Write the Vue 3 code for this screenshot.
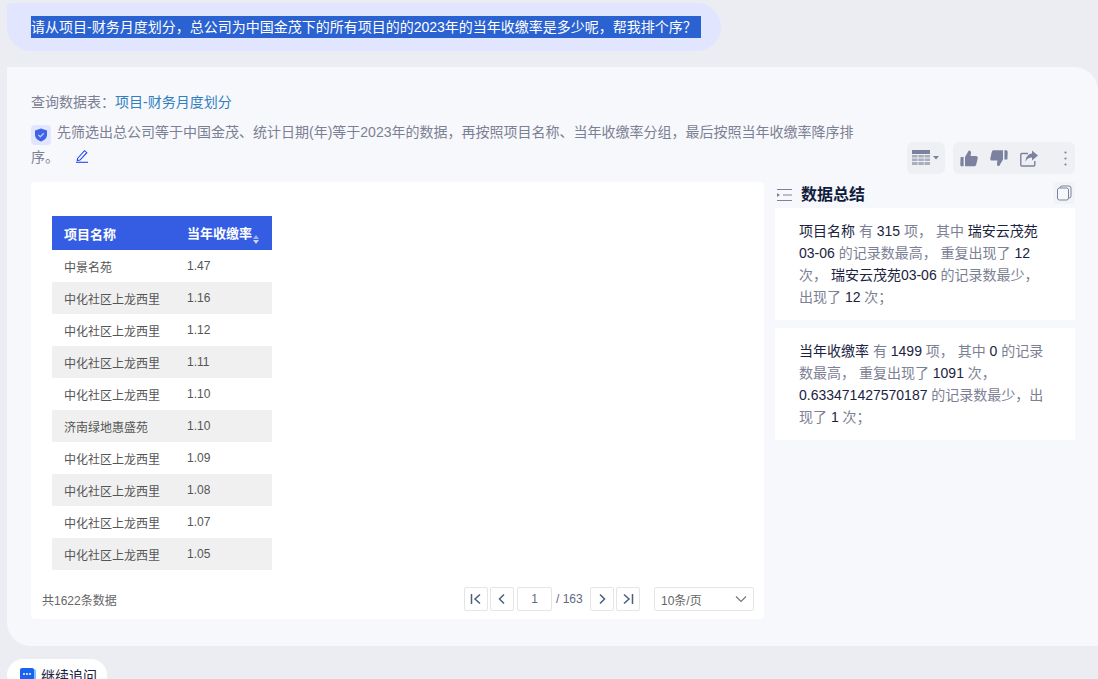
<script setup>
const rows = [
  ['中景名苑', '1.47'],
  ['中化社区上龙西里', '1.16'],
  ['中化社区上龙西里', '1.12'],
  ['中化社区上龙西里', '1.11'],
  ['中化社区上龙西里', '1.10'],
  ['济南绿地惠盛苑', '1.10'],
  ['中化社区上龙西里', '1.09'],
  ['中化社区上龙西里', '1.08'],
  ['中化社区上龙西里', '1.07'],
  ['中化社区上龙西里', '1.05']
]
</script>

<template>
  <div class="page">
    <div class="bubble"><span class="selected">请从项目-财务月度划分，总公司为中国金茂下的所有项目的的2023年的当年收缴率是多少呢，帮我排个序？</span></div>

    <section class="card">
      <div class="source">查询数据表：<span class="link">项目-财务月度划分</span></div>

      <div class="desc-row">
        <div class="desc">
          <span class="shield">
            <svg width="14" height="14" viewBox="0 0 14 14"><path d="M7 .6 13 2.5v4.6c0 3-2.6 5.2-6 6.4C3.600 12.300 1 10.100 1 7.100V2.500z" fill="#3f63e6"/><path d="M4.300 6.900 6.300 8.800 9.800 5.200" fill="none" stroke="#b9c8f7" stroke-width="1.300"/></svg>
          </span>先筛选出总公司等于中国金茂、统计日期(年)等于2023年的数据，再按照项目名称、当年收缴率分组，最后按照当年收缴率降序排序。
          <svg class="edit" width="14" height="14" viewBox="0 0 14 14"><path d="M2.500 9.500 9.500 1.700l2.300 2L5 11l-2.700.6z" fill="none" stroke="#2347e8" stroke-width="1.100"/><path d="M1 13.300h12" stroke="#2347e8" stroke-width="1.100"/></svg>
        </div>
        <div class="tools">
          <div class="tool-box table-box">
            <svg width="18" height="16" viewBox="0 0 18 16"><rect width="18" height="4" fill="#7c819f"/><path d="M0 5h5.500v2.500H0zM6.300 5h5.500v2.500H6.300zM12.500 5H18v2.500h-5.500zM0 8.500h5.500V11H0zM6.300 8.500h5.500V11H6.300zM12.500 8.500H18V11h-5.500zM0 12h5.500v3H0zM6.300 12h5.500v3H6.300zM12.500 12H18v3h-5.500z" fill="#a9adc0"/></svg>
            <svg width="6" height="4" viewBox="0 0 6 4"><path d="M0 0h6L3 3.500z" fill="#7c819f"/></svg>
          </div>
          <div class="tool-box actions">
            <svg width="18" height="17" viewBox="0 0 18 17"><path d="M5 7 8.800.6c1.600 0 2.500 1 2.200 2.600L10.500 6H16c1.300 0 2 1 1.700 2.200l-1.500 6.600c-.2.900-1 1.500-1.900 1.500H5zM.6 7H3.600V16.300H2C1 16.300.3 15.600.3 14.700z" fill="#7c819f"/></svg>
            <svg width="18" height="17" viewBox="0 0 18 17"><path d="M13 9.500 9.200 16c-1.600 0-2.500-1-2.200-2.600l.5-2.800H2c-1.300 0-2-1-1.700-2.200L1.800 1.800C2 .9 2.800.3 3.700.3H13zM17.400 9.500H14.400V.3H16c1 0 1.700.7 1.700 1.600z" fill="#7c819f"/></svg>
            <svg width="18" height="17" viewBox="0 0 18 17"><path d="M8 3.500H1.800c-.6 0-1 .4-1 1V15c0 .6.400 1 1 1h12c.6 0 1-.4 1-1v-4" fill="none" stroke="#7c819f" stroke-width="1.400"/><path d="M12 .5 18 5.500 12 10.500V7.600C9 7.600 6.800 9 5.500 11.800 5.500 7.500 8 4 12 3.600z" fill="#7c819f"/></svg>
            <svg class="more" width="3" height="15" viewBox="0 0 3 15"><circle cx="1.500" cy="1.500" r="1.100" fill="#7c819f"/><circle cx="1.500" cy="7.500" r="1.100" fill="#7c819f"/><circle cx="1.500" cy="13.500" r="1.100" fill="#7c819f"/></svg>
          </div>
        </div>
      </div>

      <div class="content">
        <div class="table-panel">
          <table class="table">
            <thead>
              <tr>
                <th class="name-col">项目名称</th>
                <th class="rate-col">当年收缴率<span class="sort"><i class="up"></i><i class="down"></i></span></th>
              </tr>
            </thead>
            <tbody>
              <tr v-for="(r, i) in rows" :key="i">
                <td class="name-col">{{ r[0] }}</td>
                <td class="rate-col">{{ r[1] }}</td>
              </tr>
            </tbody>
          </table>

          <div class="pager">
            <span class="total">共1622条数据</span>
            <div class="pager-right">
              <button class="pg">
                <svg width="12" height="12" viewBox="0 0 12 12"><path d="M1.500 1v10M10 1.500 5 6l5 4.500" fill="none" stroke="#4a5f7a" stroke-width="1.500"/></svg>
              </button>
              <button class="pg">
                <svg width="12" height="12" viewBox="0 0 12 12"><path d="M8 1.500 3.500 6 8 10.500" fill="none" stroke="#4a5f7a" stroke-width="1.500"/></svg>
              </button>
              <span class="pg-input">1</span>
              <span class="pg-count">/ 163</span>
              <button class="pg">
                <svg width="12" height="12" viewBox="0 0 12 12"><path d="M4 1.500 8.500 6 4 10.500" fill="none" stroke="#4a5f7a" stroke-width="1.500"/></svg>
              </button>
              <button class="pg">
                <svg width="12" height="12" viewBox="0 0 12 12"><path d="M2 1.500 7 6 2 10.500M10.500 1v10" fill="none" stroke="#4a5f7a" stroke-width="1.500"/></svg>
              </button>
              <div class="pg-size">
                <span>10条/页</span>
                <svg width="12" height="8" viewBox="0 0 12 8"><path d="M1 1.500 6 6.500 11 1.500" fill="none" stroke="#777" stroke-width="1.200"/></svg>
              </div>
            </div>
          </div>
        </div>

        <aside class="summary">
          <div class="summary-head">
            <svg class="fold" width="15" height="12" viewBox="0 0 15 12"><path d="M0 .5h15M6 6h9M0 11.500h15" stroke="#7c819f" stroke-width="1"/><path d="M0 4 3 6 0 8z" fill="#7c819f"/></svg>
            <span class="summary-title">数据总结</span>
            <span class="copy">
              <svg width="16" height="16" viewBox="0 0 16 16"><rect x="4" y="1" width="11" height="12" rx="2" fill="none" stroke="#7c819f"/><rect x="1.500" y="3" width="11" height="12" rx="2" fill="#f7f8fb" stroke="#7c819f"/></svg>
            </span>
          </div>
          <div class="note">
            <b>项目名称</b> 有 <b>315</b> 项， 其中 <b>瑞安云茂苑03-06</b> 的记录数最高， 重复出现了 <b>12</b> 次， <b>瑞安云茂苑03-06</b> 的记录数最少，出现了 <b>12</b> 次；
          </div>
          <div class="note">
            <b>当年收缴率</b> 有 <b>1499</b> 项， 其中 <b>0</b> 的记录数最高， 重复出现了 <b>1091</b> 次， <b>0.633471427570187</b> 的记录数最少，出现了 <b>1</b> 次；
          </div>
        </aside>
      </div>
    </section>

    <div class="followup">
      <svg width="16" height="15" viewBox="0 0 16 15"><rect x="3" y="1" width="13" height="12" rx="2" fill="#7fc4ff"/><path d="M2 0h10a2 2 0 0 1 2 2v8a2 2 0 0 1-2 2H5l-3 3v-3a2 2 0 0 1-2-2V2a2 2 0 0 1 2-2z" fill="#1a63f0"/><circle cx="4" cy="6" r="1" fill="#fff"/><circle cx="7" cy="6" r="1" fill="#fff"/><circle cx="10" cy="6" r="1" fill="#fff"/></svg>
      <span>继续追问</span>
    </div>
  </div>
</template>

<style>
html, body { margin: 0; overflow: hidden; background: #ecedf3; }
</style>

<style scoped>
.page {
  height: 679px;
  overflow: hidden;
  box-sizing: border-box;
  padding: 3px 0 0 7px;
  background: #ecedf3;
  font-family: "Liberation Sans", "Noto Sans CJK SC", sans-serif;
  font-size: 14px;
  color: #7c8094;
}
.bubble {
  width: 714px;
  height: 48px;
  box-sizing: border-box;
  padding: 13px 24px;
  background: #e1e6fe;
  border-radius: 4px 24px 24px 24px;
  line-height: 22px;
}
.selected {
  display: block;
  width: 670px;
  height: 22px;
  background: #2b62d1;
  color: #fff;
  white-space: nowrap;
}
.card {
  margin-top: 16px;
  height: 579px;
  box-sizing: border-box;
  padding: 24px 23px 0 24px;
  background: #f7f8fb;
  border-radius: 0 24px 0 24px;
}
.source { line-height: 22px; }
.link { color: #2f7fc0; }
.desc-row {
  display: flex;
  justify-content: space-between;
  align-items: flex-end;
  margin-top: 7px;
}
.desc {
  width: 826px;
  line-height: 25px;
}
.shield {
  display: inline-flex;
  align-items: center;
  justify-content: center;
  width: 20px;
  height: 20px;
  margin-right: 6px;
  border-radius: 4px;
  background: #e1e6fe;
  vertical-align: -5px;
}
.edit { margin-left: 12px; vertical-align: -1px; }
.tools { display: flex; gap: 8px; margin-bottom: -4px; }
.tool-box {
  display: flex;
  align-items: center;
  height: 32px;
  border-radius: 6px;
  background: #eff0f4;
  box-sizing: border-box;
}
.table-box { width: 38px; padding-left: 5px; gap: 3px; }
.actions { width: 122px; padding-left: 7px; gap: 12px; }
.more { margin-left: 14px; }
.content {
  display: flex;
  justify-content: space-between;
  margin-top: 12px;
}
.table-panel {
  width: 733px;
  height: 437px;
  box-sizing: border-box;
  padding: 34px 10px 0 21px;
  background: #fff;
  border-radius: 4px;
}
.table {
  width: 220px;
  border-collapse: collapse;
  table-layout: fixed;
  font-size: 12px;
  color: #555;
}
.table th {
  height: 34px;
  padding: 0;
  background: #355de4;
  color: #fff;
  font-size: 13px;
  font-weight: 700;
  text-align: left;
  white-space: nowrap;
}
.table td { height: 32px; padding: 0; white-space: nowrap; }
.table tbody tr:nth-child(even) td { background: #f0f0f0; }
.name-col { width: 135px; padding-left: 12px !important; box-sizing: border-box; }
.rate-col { width: 85px; }
.sort {
  display: inline-flex;
  flex-direction: column;
  gap: 1px;
  margin-left: 1px;
  vertical-align: -1px;
}
.sort i { display: block; border-left: 3.500px solid transparent; border-right: 3.500px solid transparent; }
.sort .up { border-bottom: 4px solid #9fb2ef; }
.sort .down { border-top: 4px solid #c9d3f5; }
.pager {
  display: flex;
  justify-content: space-between;
  align-items: center;
  margin-top: 17px;
  margin-left: -10px;
  height: 24px;
  font-size: 12px;
}
.total { color: #666; }
.pager-right { display: flex; align-items: center; color: #5f6b7f; }
.pg {
  display: flex;
  align-items: center;
  justify-content: center;
  width: 24px;
  height: 24px;
  margin: 0 0 0 2px;
  padding: 0;
  background: #fff;
  border: 1px solid #e5e5e5;
  border-radius: 2px;
  box-sizing: border-box;
}
.pg:first-child { margin-left: 0; }
.pg-input {
  width: 35px;
  height: 24px;
  margin-left: 3px;
  box-sizing: border-box;
  border: 1px solid #e5e5e5;
  border-radius: 2px;
  line-height: 22px;
  text-align: center;
}
.pg-count { width: 32px; margin-left: 4px; }
.pg-size {
  display: flex;
  align-items: center;
  justify-content: space-between;
  width: 100px;
  height: 24px;
  margin-left: 14px;
  padding: 0 6px;
  box-sizing: border-box;
  border: 1px solid #e5e5e5;
  border-radius: 2px;
  color: #666;
}
.summary { width: 300px; }
.summary-head {
  display: flex;
  align-items: center;
  height: 30px;
  margin-top: -4px;
}
.fold { margin: 3px 9px 0 2px; }
.summary-title { color: #111c3d; font-size: 16px; font-weight: 700; }
.copy {
  display: flex;
  align-items: center;
  justify-content: center;
  width: 22px;
  height: 22px;
  margin: 0 0 0 auto;
  background: #f2f3f6;
  border-radius: 4px;
}
.note {
  height: 112px;
  margin-bottom: 8px;
  box-sizing: border-box;
  padding: 12px 30px 0 24px;
  background: #fff;
  font-size: 14px;
  line-height: 22px;
  color: #7c8094;
}
.note b { font-weight: 400; color: #1b2340; }
.followup {
  display: flex;
  align-items: center;
  gap: 5px;
  width: 100px;
  height: 32px;
  margin-top: 13px;
  padding-left: 13px;
  box-sizing: border-box;
  background: #fff;
  border-radius: 16px;
  color: #1b2340;
}
</style>
